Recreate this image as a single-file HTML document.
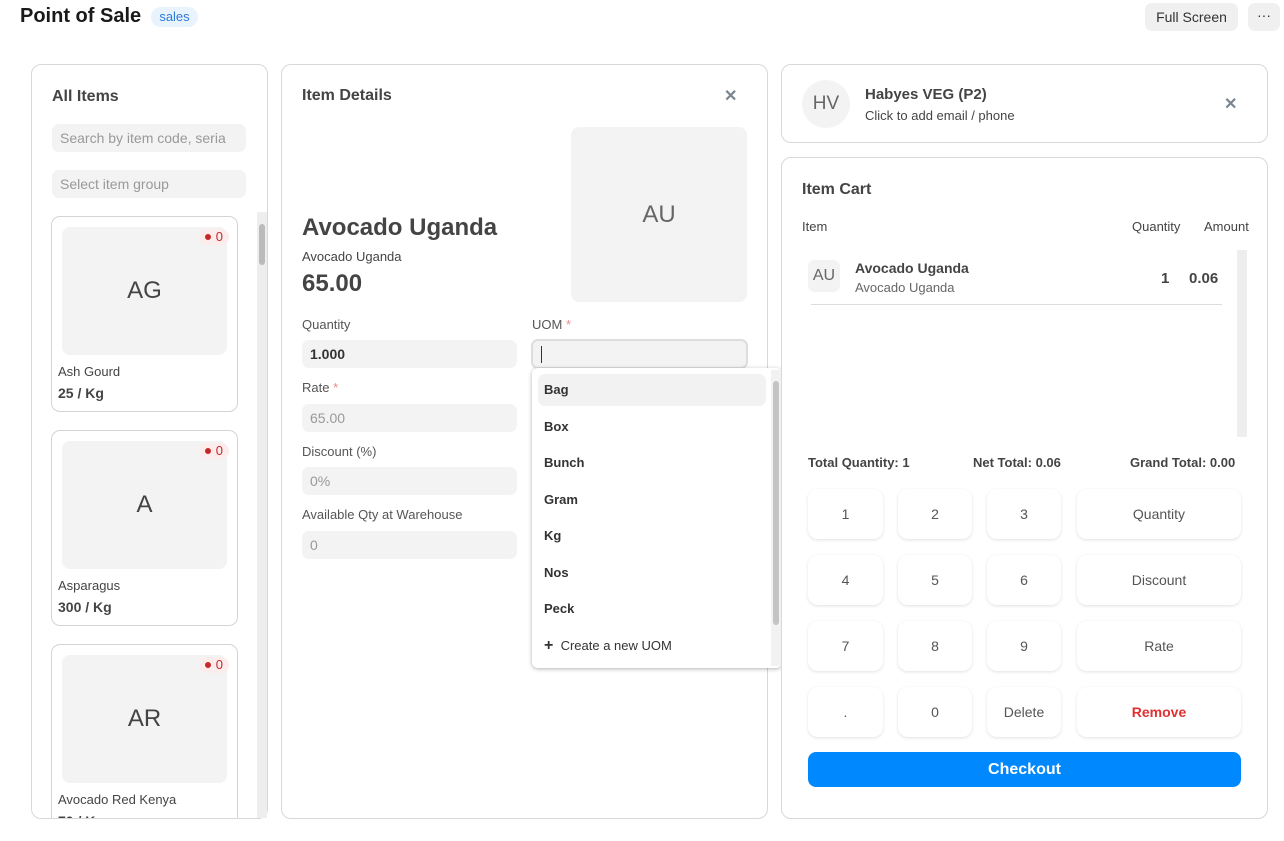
<!DOCTYPE html>
<html><head><meta charset="utf-8"><style>
*{box-sizing:border-box;margin:0;padding:0}
body{width:1284px;height:841px;background:#fff;font-family:"Liberation Sans",sans-serif;color:#383838;position:relative;overflow:hidden}
.a{position:absolute}
.panel{position:absolute;border:1px solid #d8d8d8;border-radius:10px;background:#fff}
.inp{position:absolute;background:#f3f3f3;border-radius:7px;font-size:14px;color:#999;padding-left:8px;display:flex;align-items:center}
.lbl{position:absolute;font-size:13px;color:#555}
.card{position:absolute;left:51px;width:187px;height:196px;border:1px solid #d4d4d4;border-radius:9px;background:#fff}
.card .img{position:absolute;left:10px;top:10px;width:165px;height:128px;background:#f3f3f3;border-radius:8px;font-size:24px;color:#444;display:flex;align-items:center;justify-content:center}
.card .bd{position:absolute;right:8px;top:12px;background:#fdecec;border-radius:8px;font-size:13px;color:#c62828;padding:0 6px;line-height:16px}
.card .bd i{display:inline-block;width:6px;height:6px;border-radius:50%;background:#c62828;vertical-align:middle;margin-right:5px;position:relative;top:-1px}
.card .nm{position:absolute;left:6px;top:147px;font-size:13px;color:#444}
.card .pr{position:absolute;left:6px;top:168px;font-size:14px;font-weight:bold;color:#444}
.dd{position:absolute;left:544px;font-size:13px;font-weight:bold;color:#333}
.btn{position:absolute;height:50px;border-radius:10px;background:#fff;box-shadow:0 1px 3px rgba(0,0,0,.12);display:flex;align-items:center;justify-content:center;font-size:14px;color:#555}
.x{position:absolute;font-size:16px;color:#7a8590;font-weight:bold}
</style></head><body>
<div class="a" style="left:20px;top:5px;font-size:20px;font-weight:bold;color:#1a1a1a">Point of Sale</div>
<div class="a" style="left:151px;top:7px;width:47px;height:20px;background:#e8f3fd;border-radius:10px;color:#2e7bd6;font-size:13px;text-align:center;line-height:20px">sales</div>
<div class="a" style="left:1145px;top:3px;width:93px;height:28px;background:#f0f0f0;border-radius:7px;font-size:14px;color:#333;text-align:center;line-height:28px">Full Screen</div>
<div class="a" style="left:1248px;top:3px;width:32px;height:28px;background:#f0f0f0;border-radius:7px;font-size:14px;color:#333;text-align:center;line-height:24px">···</div>

<div class="panel" style="left:31px;top:64px;width:237px;height:755px;overflow:hidden"></div>
<div class="a" style="left:52px;top:88px;font-size:16px;font-weight:bold;color:#444">All Items</div>
<div class="inp" style="left:52px;top:124px;width:194px;height:28px;overflow:hidden;white-space:nowrap">Search by item code, seria</div>
<div class="inp" style="left:52px;top:170px;width:194px;height:28px">Select item group</div>
<div class="a" style="left:257px;top:212px;width:10px;height:606px;background:#eee"></div>
<div class="a" style="left:259px;top:224px;width:6px;height:41px;background:#bbb;border-radius:3px"></div>
<div class="a" style="left:40px;top:216px;width:215px;height:602px;overflow:hidden">
<div class="card" style="left:11px;top:0"><div class="img">AG</div><div class="bd"><i></i>0</div><div class="nm">Ash Gourd</div><div class="pr">25 / Kg</div></div>
<div class="card" style="left:11px;top:214px"><div class="img">A</div><div class="bd"><i></i>0</div><div class="nm">Asparagus</div><div class="pr">300 / Kg</div></div>
<div class="card" style="left:11px;top:428px"><div class="img">AR</div><div class="bd"><i></i>0</div><div class="nm">Avocado Red Kenya</div><div class="pr">70 / Kg</div></div>
</div>

<div class="panel" style="left:281px;top:64px;width:487px;height:755px"></div>
<div class="a" style="left:302px;top:87px;font-size:16px;font-weight:bold;color:#444">Item Details</div>
<div class="x" style="left:724px;top:86px">✕</div>
<div class="a" style="left:571px;top:127px;width:176px;height:175px;background:#f3f3f3;border-radius:8px;font-size:24px;color:#666;display:flex;align-items:center;justify-content:center">AU</div>
<div class="a" style="left:302px;top:214px;font-size:24px;font-weight:bold;color:#444">Avocado Uganda</div>
<div class="a" style="left:302px;top:249px;font-size:13px;color:#444">Avocado Uganda</div>
<div class="a" style="left:302px;top:270px;font-size:24px;font-weight:bold;color:#444">65.00</div>
<div class="lbl" style="left:302px;top:317px">Quantity</div>
<div class="inp" style="left:302px;top:340px;width:215px;height:28px;color:#333;font-weight:bold">1.000</div>
<div class="lbl" style="left:532px;top:317px">UOM <span style="color:#e88">*</span></div>
<div class="inp" style="left:531px;top:339px;width:217px;height:30px;border:2px solid #ddd"><span style="width:1px;height:17px;background:#333;display:block"></span></div>
<div class="lbl" style="left:302px;top:380px">Rate <span style="color:#e88">*</span></div>
<div class="inp" style="left:302px;top:404px;width:215px;height:28px">65.00</div>
<div class="lbl" style="left:302px;top:444px">Discount (%)</div>
<div class="inp" style="left:302px;top:467px;width:215px;height:28px">0%</div>
<div class="lbl" style="left:302px;top:507px">Available Qty at Warehouse</div>
<div class="inp" style="left:302px;top:531px;width:215px;height:28px">0</div>

<div class="a" style="left:532px;top:368px;width:250px;height:300px;background:#fff;border-radius:6px;box-shadow:0 1px 4px rgba(0,0,0,.3)"></div>
<div class="a" style="left:538px;top:374px;width:228px;height:32px;background:#f2f2f2;border-radius:7px"></div>
<div class="a" style="left:771px;top:370px;width:10px;height:296px;background:#f2f2f2"></div>
<div class="a" style="left:773px;top:381px;width:6px;height:244px;background:#c4c4c4;border-radius:3px"></div>
<div class="dd" style="top:382px">Bag</div>
<div class="dd" style="top:419px">Box</div>
<div class="dd" style="top:455px">Bunch</div>
<div class="dd" style="top:492px">Gram</div>
<div class="dd" style="top:528px">Kg</div>
<div class="dd" style="top:565px">Nos</div>
<div class="dd" style="top:601px">Peck</div>
<div class="dd" style="top:637px;font-weight:normal"><b style="font-size:16px">+</b>&nbsp; Create a new UOM</div>

<div class="panel" style="left:781px;top:64px;width:487px;height:79px"></div>
<div class="a" style="left:802px;top:80px;width:48px;height:48px;border-radius:50%;background:#f3f3f3;font-size:19px;color:#666;display:flex;align-items:center;justify-content:center">HV</div>
<div class="a" style="left:865px;top:86px;font-size:15px;font-weight:bold;color:#444">Habyes VEG (P2)</div>
<div class="a" style="left:865px;top:108px;font-size:13px;color:#444">Click to add email / phone</div>
<div class="x" style="left:1224px;top:94px">✕</div>

<div class="panel" style="left:781px;top:157px;width:487px;height:662px"></div>
<div class="a" style="left:802px;top:181px;font-size:16px;font-weight:bold;color:#444">Item Cart</div>
<div class="a" style="left:802px;top:219px;font-size:13px;color:#444">Item</div>
<div class="a" style="left:1132px;top:219px;font-size:13px;color:#444">Quantity</div>
<div class="a" style="left:1204px;top:219px;font-size:13px;color:#444">Amount</div>
<div class="a" style="left:1237px;top:250px;width:10px;height:187px;background:#eee"></div>
<div class="a" style="left:808px;top:260px;width:32px;height:32px;border-radius:7px;background:#f3f3f3;font-size:16px;color:#666;display:flex;align-items:center;justify-content:center">AU</div>
<div class="a" style="left:855px;top:260px;font-size:14px;font-weight:bold;color:#444">Avocado Uganda</div>
<div class="a" style="left:855px;top:280px;font-size:13px;color:#666">Avocado Uganda</div>
<div class="a" style="left:1161px;top:270px;font-size:15px;font-weight:bold;color:#444">1</div>
<div class="a" style="left:1189px;top:270px;font-size:15px;font-weight:bold;color:#444">0.06</div>
<div class="a" style="left:811px;top:304px;width:411px;height:1px;background:#ddd"></div>
<div class="a" style="left:808px;top:455px;font-size:13px;font-weight:bold;color:#444">Total Quantity: 1</div>
<div class="a" style="left:973px;top:455px;font-size:13px;font-weight:bold;color:#444">Net Total: 0.06</div>
<div class="a" style="left:1130px;top:455px;font-size:13px;font-weight:bold;color:#444">Grand Total: 0.00</div>

<div class="btn" style="left:808px;top:489px;width:75px">1</div>
<div class="btn" style="left:898px;top:489px;width:74px">2</div>
<div class="btn" style="left:987px;top:489px;width:74px">3</div>
<div class="btn" style="left:1077px;top:489px;width:164px">Quantity</div>
<div class="btn" style="left:808px;top:555px;width:75px">4</div>
<div class="btn" style="left:898px;top:555px;width:74px">5</div>
<div class="btn" style="left:987px;top:555px;width:74px">6</div>
<div class="btn" style="left:1077px;top:555px;width:164px">Discount</div>
<div class="btn" style="left:808px;top:621px;width:75px">7</div>
<div class="btn" style="left:898px;top:621px;width:74px">8</div>
<div class="btn" style="left:987px;top:621px;width:74px">9</div>
<div class="btn" style="left:1077px;top:621px;width:164px">Rate</div>
<div class="btn" style="left:808px;top:687px;width:75px">.</div>
<div class="btn" style="left:898px;top:687px;width:74px">0</div>
<div class="btn" style="left:987px;top:687px;width:74px">Delete</div>
<div class="btn" style="left:1077px;top:687px;width:164px;color:#e03030;font-weight:bold">Remove</div>
<div class="a" style="left:808px;top:752px;width:433px;height:35px;background:#0089ff;border-radius:8px;color:#fff;font-size:16px;font-weight:bold;display:flex;align-items:center;justify-content:center">Checkout</div>
</body></html>
